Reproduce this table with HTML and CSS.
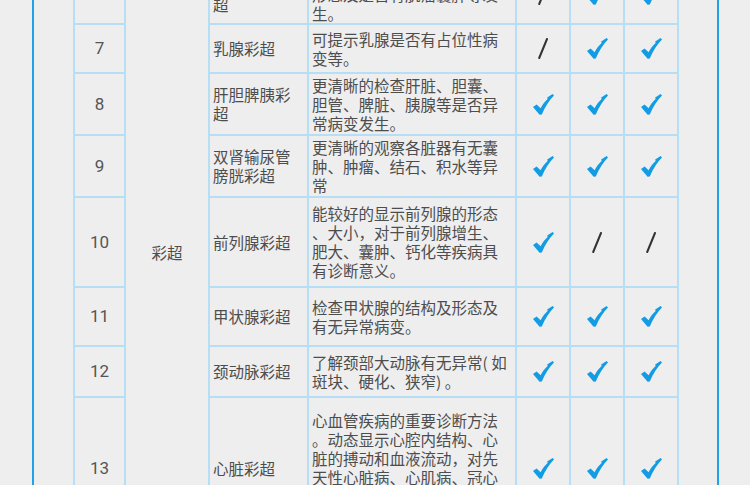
FILE: index.html
```html
<!DOCTYPE html>
<html lang="zh-CN">
<head>
    <meta charset="UTF-8">
    <meta name="viewport" content="width=device-width, initial-scale=1.0">
    <title>彩超检查项目</title>
    <link rel="stylesheet" href="styles.css">
</head>
<body>
    <svg class="defs" width="0" height="0" aria-hidden="true">
        <symbol id="tick" viewBox="0 0 21 21">
            <path d="M0 13 L3.6 10.4 L7.6 14.2 C9.6 10.4 12 7.4 14.6 5 L14.2 3.4 L19.6 0 L21 1.6 C16.4 6 12.2 12.6 8.8 20.6 L6.6 20.8 Z"/>
        </symbol>
        <symbol id="slash" viewBox="0 0 10 21">
            <line x1="9" y1="1" x2="1.2" y2="20" stroke-width="2" stroke-linecap="round"/>
        </symbol>
    </svg>

    <div class="page">
        <table class="exam-table">
            <colgroup>
                <col class="col-num">
                <col class="col-cat">
                <col class="col-name">
                <col class="col-desc">
                <col class="col-mark">
                <col class="col-mark">
                <col class="col-mark">
            </colgroup>
            <tbody>
                <tr class="row-6">
                    <td class="num">6</td>
                    <td class="cat" rowspan="8">彩超</td>
                    <td class="name">子宫附件彩超</td>
                    <td class="desc">检查子宫、卵巢、附件大小形态及是否有肌瘤囊肿等发生。</td>
                    <td class="mark"><svg class="no"><use href="#slash"/></svg></td>
                    <td class="mark"><svg class="yes"><use href="#tick"/></svg></td>
                    <td class="mark"><svg class="yes"><use href="#tick"/></svg></td>
                </tr>
                <tr class="row-7">
                    <td class="num">7</td>
                    <td class="name">乳腺彩超</td>
                    <td class="desc">可提示乳腺是否有占位性病变等。</td>
                    <td class="mark"><svg class="no"><use href="#slash"/></svg></td>
                    <td class="mark"><svg class="yes"><use href="#tick"/></svg></td>
                    <td class="mark"><svg class="yes"><use href="#tick"/></svg></td>
                </tr>
                <tr class="row-8">
                    <td class="num">8</td>
                    <td class="name">肝胆脾胰彩超</td>
                    <td class="desc">更清晰的检查肝脏、胆囊、胆管、脾脏、胰腺等是否异常病变发生。</td>
                    <td class="mark"><svg class="yes"><use href="#tick"/></svg></td>
                    <td class="mark"><svg class="yes"><use href="#tick"/></svg></td>
                    <td class="mark"><svg class="yes"><use href="#tick"/></svg></td>
                </tr>
                <tr class="row-9">
                    <td class="num">9</td>
                    <td class="name">双肾输尿管膀胱彩超</td>
                    <td class="desc">更清晰的观察各脏器有无囊肿、肿瘤、结石、积水等异常</td>
                    <td class="mark"><svg class="yes"><use href="#tick"/></svg></td>
                    <td class="mark"><svg class="yes"><use href="#tick"/></svg></td>
                    <td class="mark"><svg class="yes"><use href="#tick"/></svg></td>
                </tr>
                <tr class="row-10">
                    <td class="num">10</td>
                    <td class="name">前列腺彩超</td>
                    <td class="desc">能较好的显示前列腺的形态、大小，对于前列腺增生、肥大、囊肿、钙化等疾病具有诊断意义。</td>
                    <td class="mark"><svg class="yes"><use href="#tick"/></svg></td>
                    <td class="mark"><svg class="no"><use href="#slash"/></svg></td>
                    <td class="mark"><svg class="no"><use href="#slash"/></svg></td>
                </tr>
                <tr class="row-11">
                    <td class="num">11</td>
                    <td class="name">甲状腺彩超</td>
                    <td class="desc">检查甲状腺的结构及形态及有无异常病变。</td>
                    <td class="mark"><svg class="yes"><use href="#tick"/></svg></td>
                    <td class="mark"><svg class="yes"><use href="#tick"/></svg></td>
                    <td class="mark"><svg class="yes"><use href="#tick"/></svg></td>
                </tr>
                <tr class="row-12">
                    <td class="num">12</td>
                    <td class="name">颈动脉彩超</td>
                    <td class="desc">了解颈部大动脉有无异常( 如斑块、硬化、狭窄) 。</td>
                    <td class="mark"><svg class="yes"><use href="#tick"/></svg></td>
                    <td class="mark"><svg class="yes"><use href="#tick"/></svg></td>
                    <td class="mark"><svg class="yes"><use href="#tick"/></svg></td>
                </tr>
                <tr class="row-13">
                    <td class="num">13</td>
                    <td class="name">心脏彩超</td>
                    <td class="desc">心血管疾病的重要诊断方法。动态显示心腔内结构、心脏的搏动和血液流动，对先天性心脏病、心肌病、冠心病、瓣膜病等有重要诊断价值。</td>
                    <td class="mark"><svg class="yes"><use href="#tick"/></svg></td>
                    <td class="mark"><svg class="yes"><use href="#tick"/></svg></td>
                    <td class="mark"><svg class="yes"><use href="#tick"/></svg></td>
                </tr>
            </tbody>
        </table>
    </div>
</body>
</html>
```

FILE: styles.css
```css
/* Page */
html, body {
    margin: 0;
    padding: 0;
    height: 100%;
    overflow: hidden;
}

body {
    background: #eeeeef;
    font-family: "Noto Sans CJK SC", "Noto Sans", sans-serif;
    color: #4d4d4d;
}

.defs {
    position: absolute;
}

.page {
    box-sizing: border-box;
    width: 687px;
    height: 485px;
    margin-left: 32px;
    padding-left: 39px;
    border-left: 2px solid #1fa3e8;
    border-right: 2px solid #1fa3e8;
    overflow: hidden;
}

/* Table */
.exam-table {
    border-collapse: collapse;
    table-layout: fixed;
    width: 606px;
    margin-top: -36px;
    font-size: 15.5px;
    line-height: 19px;
}

.col-num { width: 51px; }
.col-cat { width: 84px; }
.col-name { width: 99px; }
.col-desc { width: 208px; }
.col-mark { width: 54px; }

.exam-table td {
    border: 2px solid #b6dff5;
    padding: 0 3px;
    vertical-align: middle;
}

.row-6 { height: 58px; }
.row-7 { height: 49px; }
.row-8 { height: 62px; }
.row-9 { height: 62px; }
.row-10 { height: 90px; }
.row-11 { height: 59px; }
.row-12 { height: 51px; }
.row-13 { height: 142px; }

.num {
    text-align: center;
    font-family: Roboto, "Noto Sans", sans-serif;
    font-size: 17px;
    color: #555;
}

/* the number of the half-hidden first row sits above the fold */
.exam-table .row-6 .num {
    vertical-align: top;
}

.cat {
    text-align: center;
}

.desc {
    line-break: anywhere;
}

.mark {
    text-align: center;
}

.mark svg {
    display: block;
    margin: 0 auto;
}

.yes {
    width: 21px;
    height: 21px;
    fill: #139ce3;
}

.no {
    width: 10px;
    height: 21px;
    stroke: #333;
}
```
